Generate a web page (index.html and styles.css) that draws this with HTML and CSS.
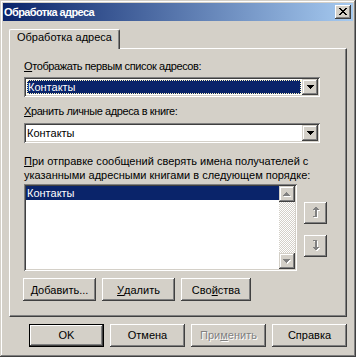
FILE: index.html
```html
<!DOCTYPE html>
<html lang="ru">
<head>
<meta charset="utf-8">
<title>Обработка адреса</title>
<link rel="stylesheet" href="styles.css">
</head>
<body>
<div class="window">
  <div class="titlebar">
    <span class="title">Обработка адреса</span>
    <div class="close">
      <svg width="8" height="7" viewBox="0 0 8 7" shape-rendering="crispEdges">
        <path fill="#000" d="M0 0h2v1H0zM6 0h2v1H6zM1 1h2v1H1zM5 1h2v1H5zM2 2h4v1H2zM3 3h2v1H3zM2 4h4v1H2zM1 5h2v1H1zM5 5h2v1H5zM0 6h2v1H0zM6 6h2v1H6z"/>
      </svg>
    </div>
  </div>
  <div class="client">
    <div class="tabstrip">
      <div class="tab">Обработка адреса</div>
    </div>
    <div class="panel">
      <div class="label tight"><u>О</u>тображать первым список адресов:</div>
      <div class="combo">
        <div class="field focused"><span>Контакты</span></div>
        <div class="dropbtn">
          <svg width="7" height="4" viewBox="0 0 7 4" shape-rendering="crispEdges"><path fill="#000" d="M0 0h7v1H0zM1 1h5v1H1zM2 2h3v1H2zM3 3h1v1H3z"/></svg>
        </div>
      </div>
      <div class="label l2 tight"><u>Х</u>ранить личные адреса в книге:</div>
      <div class="combo c2">
        <div class="field"><span>Контакты</span></div>
        <div class="dropbtn">
          <svg width="7" height="4" viewBox="0 0 7 4" shape-rendering="crispEdges"><path fill="#000" d="M0 0h7v1H0zM1 1h5v1H1zM2 2h3v1H2zM3 3h1v1H3z"/></svg>
        </div>
      </div>
      <div class="label l3"><u>П</u>ри отправке сообщений сверять имена получателей с<br>указанными адресными книгами в следующем порядке:</div>
      <div class="listrow">
        <div class="listbox">
          <div class="items">
            <div class="item selected">Контакты</div>
          </div>
          <div class="scrollbar">
            <div class="sbbtn">
              <svg width="8" height="5" viewBox="0 0 8 5" shape-rendering="crispEdges"><path fill="#fff" d="M4 1h1v1H4zM3 2h3v1H3zM2 3h5v1H2zM1 4h7v1H1z"/><path fill="#808080" d="M3 0h1v1H3zM2 1h3v1H2zM1 2h5v1H1zM0 3h7v1H0z"/></svg>
            </div>
            <div class="track"></div>
            <div class="sbbtn">
              <svg width="8" height="5" viewBox="0 0 8 5" shape-rendering="crispEdges"><path fill="#fff" d="M1 1h7v1H1zM2 2h5v1H2zM3 3h3v1H3zM4 4h1v1H4z"/><path fill="#808080" d="M0 0h7v1H0zM1 1h5v1H1zM2 2h3v1H2zM3 3h1v1H3z"/></svg>
            </div>
          </div>
        </div>
        <div class="movebtns">
          <div class="btn movebtn">
            <svg width="7" height="11" viewBox="0 0 7 11" shape-rendering="crispEdges"><path fill="#fff" d="M3 1h2v1H3zM2 2h4v1H2zM1 3h6v1H1zM3 4h2v6H3zM1 10h4v1H1z"/><path fill="#808080" d="M2 0h2v1H2zM1 1h4v1H1zM0 2h6v1H0zM2 3h2v6H2zM0 9h4v1H0z"/></svg>
          </div>
          <div class="btn movebtn">
            <svg width="7" height="11" viewBox="0 0 7 11" shape-rendering="crispEdges"><path fill="#fff" d="M1 1h4v1H1zM3 2h2v6H3zM1 8h6v1H1zM2 9h4v1H2zM3 10h2v1H3z"/><path fill="#808080" d="M0 0h4v1H0zM2 1h2v6H2zM0 7h6v1H0zM1 8h4v1H1zM2 9h2v1H2z"/></svg>
          </div>
        </div>
      </div>
      <div class="btnrow">
        <div class="btn w73"><u>Д</u>обавить...</div>
        <div class="btn w73"><u>У</u>далить</div>
        <div class="btn w70">Сво<u>й</u>ства</div>
      </div>
    </div>
    <div class="footer">
      <div class="btn fbtn default">OK</div>
      <div class="btn fbtn">Отмена</div>
      <div class="btn fbtn disabled">При<u>м</u>енить</div>
      <div class="btn fbtn">Справка</div>
    </div>
  </div>
</div>
</body>
</html>
```
FILE: styles.css
```css
* { box-sizing: border-box; }
html, body { margin: 0; padding: 0; }
body {
  width: 356px;
  height: 357px;
  overflow: hidden;
  background: #d4d0c8;
  font-family: "Liberation Sans", Arial, sans-serif;
  font-size: 11px;
  color: #000;
}
u { text-decoration: underline; text-underline-offset: 1px; }

.window {
  width: 356px;
  height: 357px;
  padding: 3px;
  background: #d4d0c8;
  display: flex;
  flex-direction: column;
  box-shadow: inset -1px -1px #404040, inset 1px 1px #d4d0c8,
              inset -2px -2px #808080, inset 2px 2px #fff;
}

.titlebar {
  height: 18px;
  flex: none;
  display: flex;
  align-items: center;
  justify-content: space-between;
  padding: 0 2px 0 1px;
  background: linear-gradient(to right, #0a246a, #a6caf0);
  color: #fff;
  font-weight: bold;
  font-size: 11px;
  letter-spacing: -0.6px;
}
.title { line-height: 14px; }
.close {
  width: 16px;
  height: 14px;
  background: #d4d0c8;
  display: flex;
  align-items: flex-start;
  justify-content: flex-start;
  padding: 3px 0 0 4px;
  box-shadow: inset -1px -1px #404040, inset 1px 1px #fff,
              inset -2px -2px #808080, inset 2px 2px #d4d0c8;
}
.close svg { display: block; }

.client {
  flex: 1;
  display: flex;
  flex-direction: column;
  padding: 8px 6px 7px 6px;
}

.tabstrip {
  height: 19px;
  display: flex;
  position: relative;
  z-index: 1;
}
.tab {
  height: 20px;
  padding: 0 7px 0 7px;
  line-height: 14px;
  background: #d4d0c8;
  border-top: 1px solid #fff;
  border-left: 1px solid #fff;
  border-right: 1px solid #404040;
  box-shadow: inset -1px 0 #808080;
  border-top-left-radius: 2px;
  border-top-right-radius: 2px;
}

.panel {
  height: 269px;
  flex: none;
  border-top: 1px solid #fff;
  border-left: 1px solid #fff;
  border-right: 1px solid #404040;
  border-bottom: 1px solid #404040;
  box-shadow: inset -1px -1px #808080;
  padding: 10px 0 15px 14px;
  display: flex;
  flex-direction: column;
}

.label { line-height: 14px; white-space: nowrap; }
.tight { letter-spacing: -0.4px; }
.l2 { margin-top: 7px; }
.l3 { margin-top: 11px; }

.combo {
  width: 296px;
  height: 20px;
  margin-top: 4px;
  padding: 2px;
  display: flex;
  background: #fff;
  box-shadow: inset 1px 1px #808080, inset -1px -1px #fff,
              inset 2px 2px #404040, inset -2px -2px #d4d0c8;
}
.c2 { margin-top: 5px; }
.field {
  flex: 1;
  display: flex;
  padding: 1px 0 0 1px;
  line-height: 14px;
}
.field.focused {
  margin: 1px;
  padding: 0;
  background: #0a246a;
  color: #fff;
  border: 1px dotted #fff8c0;
  line-height: 12px;
}
.dropbtn {
  width: 16px;
  height: 16px;
  background: #d4d0c8;
  display: flex;
  align-items: flex-start;
  justify-content: flex-start;
  padding: 6px 0 0 5px;
  box-shadow: inset -1px -1px #404040, inset 1px 1px #d4d0c8,
              inset -2px -2px #808080, inset 2px 2px #fff;
}
.dropbtn svg { display: block; }

.listrow {
  margin-top: 2px;
  height: 87px;
  display: flex;
}
.listbox {
  width: 273px;
  height: 87px;
  padding: 2px;
  display: flex;
  background: #fff;
  box-shadow: inset 1px 1px #808080, inset -1px -1px #fff,
              inset 2px 2px #404040, inset -2px -2px #d4d0c8;
}
.items { flex: 1; }
.item { height: 14px; line-height: 14px; padding-left: 1px; }
.item.selected { background: #0a246a; color: #fff; }
.scrollbar {
  width: 16px;
  display: flex;
  flex-direction: column;
}
.sbbtn {
  width: 16px;
  height: 16px;
  flex: none;
  background: #d4d0c8;
  display: flex;
  align-items: flex-start;
  justify-content: flex-start;
  padding: 6px 0 0 4px;
  box-shadow: inset -1px -1px #404040, inset 1px 1px #d4d0c8,
              inset -2px -2px #808080, inset 2px 2px #fff;
}
.sbbtn svg { display: block; }
.track {
  flex: 1;
  background: repeating-conic-gradient(#fff 0 25%, #d4d0c8 0 50%) 0 0 / 2px 2px;
}

.movebtns {
  margin-left: 7px;
  padding-top: 18px;
  display: flex;
  flex-direction: column;
  gap: 11px;
}

.btn {
  height: 23px;
  display: flex;
  align-items: center;
  justify-content: center;
  line-height: 14px;
  background: #d4d0c8;
  white-space: nowrap;
  box-shadow: inset -1px -1px #404040, inset 1px 1px #fff,
              inset -2px -2px #808080, inset 2px 2px #d4d0c8;
}
.movebtn {
  width: 23px;
  height: 22px;
  padding: 0 0 1px 1px;
}
.movebtn svg { display: block; }

.btnrow {
  margin-top: 7px;
  margin-left: -1px;
  display: flex;
  gap: 6px;
}
.w73 { width: 73px; }
.w70 { width: 70px; }

.footer {
  margin-top: 7px;
  display: flex;
  justify-content: flex-end;
  gap: 6px;
}
.fbtn { width: 75px; padding-bottom: 1px; }
.default {
  border: 1px solid #000;
}
.disabled {
  color: #808080;
  text-shadow: 1px 1px 0 #fff;
}
```
